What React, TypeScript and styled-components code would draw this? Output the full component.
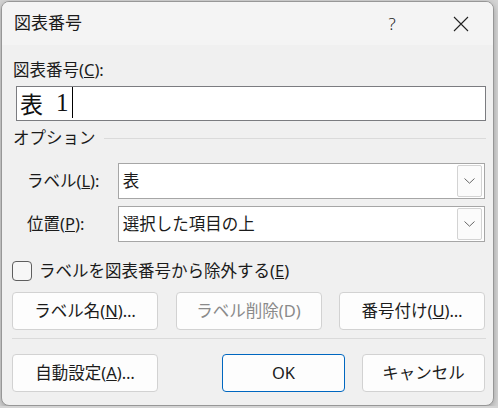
import { createGlobalStyle, styled } from "styled-components";

const GlobalStyle = createGlobalStyle`
  html, body {
    margin: 0;
    padding: 0;
    background: #d4d4d4;
  }
  body {
    padding: 1px 0 0 1px;
    font-family: "Noto Sans", "Noto Sans CJK JP", sans-serif;
    color: #1b1b1b;
  }
  * { box-sizing: border-box; }
`;

const Dialog = styled.div`
  width: 493px;
  height: 405px;
  border: 1px solid #979797;
  border-radius: 8px;
  background: #f0f0f0;
  overflow: hidden;
  display: flex;
  flex-direction: column;
  box-shadow: 0 2px 6px rgba(0, 0, 0, 0.25);
`;

const TitleBar = styled.div`
  height: 43px;
  flex-shrink: 0;
  display: flex;
  align-items: center;
  padding-left: 12px;
  background: #f4f4f4;
`;

const Title = styled.div`
  flex: 1;
  font-size: 17px;
  line-height: 20px;
  margin-top: -1px;
`;

const TitleButton = styled.div<{ $mr?: number }>`
  width: 48px;
  height: 43px;
  display: flex;
  align-items: center;
  justify-content: center;
  margin-right: ${(p) => p.$mr ?? 0}px;
  font-size: 17px;
  font-weight: 300;
  color: #222;
`;

const Body = styled.div`
  flex: 1;
  display: flex;
  flex-direction: column;
  padding: 0 8px 0 10px;
  font-size: 16.5px;
`;

const Caption = styled.div`
  margin-top: 15px;
  height: 20px;
  line-height: 20px;
  padding-left: 1px;
`;

const TextInput = styled.div`
  margin-top: 6px;
  margin-left: 4px;
  width: 470px;
  height: 35px;
  border: 1px solid #7b7c80;
  background: #fff;
  display: flex;
  align-items: flex-end;
  padding: 0 0 2px 3px;
`;

const BigKanji = styled.span`
  font-family: "Noto Sans CJK JP", sans-serif;
  font-size: 23px;
  line-height: 30px;
  color: #111;
`;

const BigNum = styled.span`
  font-family: "Liberation Serif", serif;
  font-size: 25px;
  line-height: 30px;
  margin-left: 13px;
  color: #111;
`;

const Caret = styled.span`
  width: 1px;
  height: 31px;
  background: #000;
  margin-left: 3px;
`;

const GroupHeader = styled.div`
  margin-top: 7px;
  height: 20px;
  display: flex;
  align-items: center;
  gap: 8px;
  line-height: 20px;
  padding-left: 1px;

  &::after {
    content: "";
    flex: 1;
    height: 1px;
    background: #dadada;
    margin-right: -1px;
  }
`;

const FieldRow = styled.div<{ $mt: number }>`
  margin-top: ${(p) => p.$mt}px;
  display: flex;
  align-items: center;
  padding-left: 15px;
`;

const FieldLabel = styled.div`
  width: 91px;
  line-height: 20px;
`;

const Select = styled.div`
  width: 368px;
  height: 36px;
  border: 1px solid #a6a6a6;
  background: #fff;
  display: flex;
  align-items: center;
  justify-content: space-between;
  padding: 0 2px 0 4px;
`;

const SelectValue = styled.span`
  line-height: 20px;
`;

const DropButton = styled.div`
  width: 25px;
  height: 32px;
  border: 1px solid #d3d3d3;
  border-radius: 2px;
  background: #fbfbfb;
  display: flex;
  align-items: center;
  justify-content: center;
`;

const CheckRow = styled.div`
  margin-top: 19px;
  display: flex;
  align-items: center;
  gap: 7px;
`;

const CheckBox = styled.div`
  width: 20px;
  height: 20px;
  border: 1px solid #5e5e5e;
  border-radius: 4px;
  background: #f7f7f7;
`;

const CheckText = styled.span`
  line-height: 20px;
`;

const ButtonGrid = styled.div`
  margin-top: 11px;
  display: grid;
  grid-template-columns: 146px 146px 146px;
  justify-content: space-between;
`;

const Button = styled.div<{ $w?: number; $disabled?: boolean; $primary?: boolean }>`
  width: ${(p) => (p.$w ? `${p.$w}px` : "auto")};
  height: 38px;
  display: flex;
  align-items: center;
  justify-content: center;
  background: #fdfdfd;
  border: 1px solid ${(p) => (p.$primary ? "#0067c0" : "#d2d2d2")};
  border-radius: 4px;
  color: ${(p) => (p.$disabled ? "#8a8a8a" : "#1b1b1b")};
  line-height: 20px;
  padding-bottom: 1px;
`;

const Separator = styled.div`
  margin-top: 8px;
  height: 1px;
  background: #dadada;
  width: 474px;
`;

const ActionRow = styled.div`
  margin-top: 15px;
  display: flex;
  align-items: center;
`;

const Spacer = styled.div`
  flex: 1;
`;

const Gap = styled.div`
  width: 17px;
`;

function Chevron() {
  return (
    <svg width="11" height="6" viewBox="0 0 11 6">
      <path d="M0.5 0.5 L5.5 5.2 L10.5 0.5" fill="none" stroke="#666" strokeWidth="1" />
    </svg>
  );
}

function CloseIcon() {
  return (
    <svg width="16" height="16" viewBox="0 0 16 16">
      <path d="M1 1 L15 15 M15 1 L1 15" stroke="#222" strokeWidth="1.1" />
    </svg>
  );
}

export default function App() {
  return (
    <>
      <GlobalStyle />
      <Dialog>
        <TitleBar>
          <Title>図表番号</Title>
          <TitleButton $mr={21}>?</TitleButton>
          <TitleButton $mr={8}>
            <CloseIcon />
          </TitleButton>
        </TitleBar>
        <Body>
          <Caption>
            図表番号(<u>C</u>):
          </Caption>
          <TextInput>
            <BigKanji>表</BigKanji>
            <BigNum>1</BigNum>
            <Caret />
          </TextInput>
          <GroupHeader>オプション</GroupHeader>
          <FieldRow $mt={15}>
            <FieldLabel>
              ラベル(<u>L</u>):
            </FieldLabel>
            <Select>
              <SelectValue>表</SelectValue>
              <DropButton>
                <Chevron />
              </DropButton>
            </Select>
          </FieldRow>
          <FieldRow $mt={7}>
            <FieldLabel>
              位置(<u>P</u>):
            </FieldLabel>
            <Select>
              <SelectValue>選択した項目の上</SelectValue>
              <DropButton>
                <Chevron />
              </DropButton>
            </Select>
          </FieldRow>
          <CheckRow>
            <CheckBox />
            <CheckText>
              ラベルを図表番号から除外する(<u>E</u>)
            </CheckText>
          </CheckRow>
          <ButtonGrid>
            <Button>
              ラベル名(<u>N</u>)…
            </Button>
            <Button $disabled>ラベル削除(D)</Button>
            <Button>
              番号付け(<u>U</u>)…
            </Button>
          </ButtonGrid>
          <Separator />
          <ActionRow>
            <Button $w={146}>
              自動設定(<u>A</u>)…
            </Button>
            <Spacer />
            <Button $w={123} $primary>
              OK
            </Button>
            <Gap />
            <Button $w={123}>キャンセル</Button>
          </ActionRow>
        </Body>
      </Dialog>
    </>
  );
}
